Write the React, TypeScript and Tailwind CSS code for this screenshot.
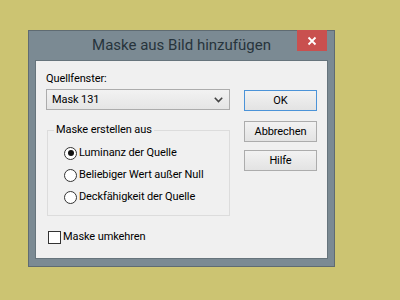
import React from "react";

const font = { fontFamily: 'Roboto, "Noto Sans", sans-serif' };

function Radio({ checked, label }: { checked?: boolean; label: string }) {
  return (
    <div className="flex items-center h-[22px]">
      <div className="ml-[16px] w-[13px] h-[13px] rounded-full border border-[#333] bg-white flex items-center justify-center">
        {checked && <div className="w-[6px] h-[6px] rounded-full bg-[#111]" />}
      </div>
      <span className="ml-[2px] text-[11px] leading-[16px] tracking-[-0.1px] text-black">{label}</span>
    </div>
  );
}

function Btn({ label, primary }: { label: string; primary?: boolean }) {
  return (
    <div
      className={`w-[73px] h-[21px] flex items-center justify-center text-[11px] leading-[16px] tracking-[-0.1px] text-black bg-gradient-to-b from-[#f2f2f2] to-[#e3e3e3] border ${
        primary ? "border-[#4b93d8]" : "border-[#acacac]"
      }`}
    >
      {label}
    </div>
  );
}

export default function App() {
  return (
    <div className="w-[400px] h-[300px] bg-[#ccc472] pt-[30px] pl-[28px]" style={font}>
      <div className="relative w-[307px] h-[237px] border border-[#5f6b72] bg-[#7b8a93] flex flex-col">
        <div className="h-[29px] flex items-center justify-center text-[15px] text-[#27343c]">
          Maske aus Bild hinzufügen
        </div>
        <div className="absolute top-[-1px] right-[7px] w-[30px] h-[21px] bg-[#c9504f] flex items-center justify-center">
          <svg width="10" height="10" viewBox="0 0 10 10">
            <path d="M1.5 1.5 L8.5 8.5 M8.5 1.5 L1.5 8.5" stroke="white" strokeWidth="1.8" />
          </svg>
        </div>
        <div className="mx-[6px] h-[199px] border border-[#66747c] bg-[#f0f0f0] flex">
          <div className="pl-[10px] pt-[10px] w-[193px] flex flex-col">
            <div className="text-[11px] leading-[16px] tracking-[-0.1px] text-black">Quellfenster:</div>
            <div className="mt-[2px] w-[184px] h-[21px] border border-[#acacac] bg-gradient-to-b from-[#f2f2f2] to-[#e5e5e5] flex items-center pl-[5px] pr-[4px]">
              <span className="text-[11px] leading-[16px] tracking-[-0.1px] text-black flex-1">Mask 131</span>
              <svg width="9" height="6" viewBox="0 0 9 6" className="mr-[2px]">
                <path d="M0.8 0.8 L4.5 4.6 L8.2 0.8" stroke="#444" strokeWidth="1.6" fill="none" />
              </svg>
            </div>
            <div className="relative mt-[20px] ml-[1px] w-[183px] h-[86px] border border-[#dcdcdc] pt-[11px]">
              <div className="absolute left-[6px] top-[-9px] px-[2px] bg-[#f0f0f0] text-[11px] leading-[16px] tracking-[-0.1px] text-black">
                Maske erstellen aus
              </div>
              <Radio checked label="Luminanz der Quelle" />
              <Radio label="Beliebiger Wert außer Null" />
              <Radio label="Deckfähigkeit der Quelle" />
            </div>
            <div className="mt-[13px] ml-[2px] flex items-center h-[16px]">
              <div className="w-[13px] h-[13px] border border-[#333] bg-white" />
              <span className="ml-[2px] text-[11px] leading-[16px] tracking-[-0.1px] text-black">Maske umkehren</span>
            </div>
          </div>
          <div className="ml-[15px] pt-[29px] flex flex-col">
            <Btn label="OK" primary />
            <div className="h-[10px]" />
            <Btn label="Abbrechen" />
            <div className="h-[8px]" />
            <Btn label="Hilfe" />
          </div>
        </div>
      </div>
    </div>
  );
}
